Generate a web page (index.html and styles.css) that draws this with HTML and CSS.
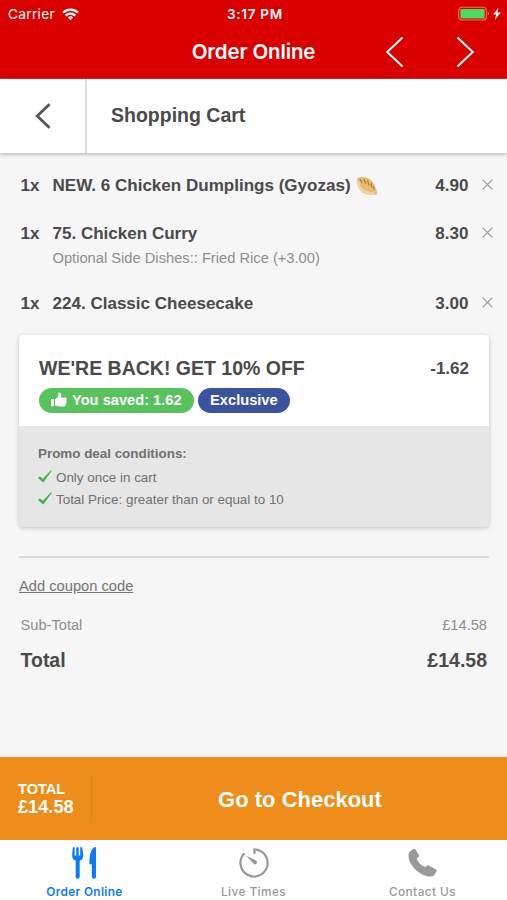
FILE: index.html
```html
<!DOCTYPE html>
<html lang="en">
<head>
<meta charset="utf-8">
<title>Shopping Cart</title>
<link rel="stylesheet" href="styles.css">
</head>
<body>
<div class="app">
  <header class="top">
    <div class="status">
      <div class="carrier"><span>Carrier</span>
        <svg width="17" height="13" viewBox="0 0 17 13" fill="none" stroke="#fff" stroke-width="2.300"><path d="M1 4.600a10.700 10.700 0 0 1 15 0M3.700 7.600a6.800 6.800 0 0 1 9.600 0"/><path d="M8.500 12.200 5.900 9.500a3.700 3.700 0 0 1 5.200 0z" fill="#fff" stroke="none"/></svg>
      </div>
      <div class="time">3:17 PM</div>
      <div class="power">
        <svg width="44" height="16" viewBox="0 0 44 16"><rect x=".7" y="1.200" width="27.600" height="12.800" rx="3" fill="none" stroke="#ef7650" stroke-width="1.100"/><rect x="2.400" y="3" width="24.200" height="9.400" rx="1.200" fill="#4cd964"/><path d="M29.800 5.600c1.600.7 1.600 3.200 0 4z" fill="#ef7650"/><path d="M40.500 1.600 35.200 8.600h3L36.800 14l6-7.600h-3.300z" fill="#fff"/></svg>
      </div>
    </div>
    <div class="nav">
      <h1>Order Online</h1>
      <svg class="arrows" width="90" height="32" viewBox="0 0 90 32" fill="none" stroke="#fff" stroke-width="2"><path d="M17.500 1.500 2.200 16l15.300 14.500M72.500 1.500 87.800 16 72.500 30.500"/></svg>
    </div>
  </header>
  <div class="subhead">
    <div class="back"><svg width="16" height="26" viewBox="0 0 16 26" fill="none" stroke="#555" stroke-width="2.800"><path d="M14.500 1.200 2.200 13l12.300 11.800"/></svg></div>
    <h2>Shopping Cart</h2>
  </div>
  <main>
    <ul class="items">
      <li><span class="qty">1x</span><div class="name">NEW. 6 Chicken Dumplings (Gyozas)
        <svg class="gyoza" width="22" height="20" viewBox="0 0 22 20"><path d="M1 3C2 .8 7 .2 11.500 2c5 2 7.500 6.500 8.500 11l1.500 4.600c-.5 1.200-2 1.400-3.500.9-5 .8-10.500-.3-14-4.500C1.500 11 .2 6 1 3z" fill="#e6bb78"/><path d="M2 5c0 5 3 9 7.500 11 3 1.300 6 1.500 9 1.500" fill="none" stroke="#f3d59d" stroke-width="2.600"/><path d="M4 3.200l2.200 3.600M7.800 3l2 4.800M11.600 4.300l1.400 5M15 6.800l.8 4.800M17.800 10.500l.2 3.200" fill="none" stroke="#a8743d" stroke-width="1.200"/></svg></div><span class="price">4.90</span><svg class="del" viewBox="0 0 11 11"><path d="M.6.6l9.800 9.800M10.400.6.6 10.400"/></svg></li>
      <li><span class="qty">1x</span><div class="name">75. Chicken Curry<small>Optional Side Dishes:: Fried Rice (+3.00)</small></div><span class="price">8.30</span><svg class="del" viewBox="0 0 11 11"><path d="M.6.6l9.800 9.800M10.400.6.6 10.400"/></svg></li>
      <li><span class="qty">1x</span><div class="name">224. Classic Cheesecake</div><span class="price">3.00</span><svg class="del" viewBox="0 0 11 11"><path d="M.6.6l9.800 9.800M10.400.6.6 10.400"/></svg></li>
    </ul>
    <section class="promo">
      <div class="deal">
        <div class="deal-row"><h3>WE'RE BACK! GET 10% OFF</h3><span class="price">-1.62</span></div>
        <div class="tags">
          <span class="tag saved"><svg width="16" height="15" viewBox="0 0 16 15" fill="#fff"><path d="M0 7h3v7.200H0zM4 7.200C6 6 7.200 4.600 7.300 2.400 7.300.8 8 .2 9 .6c1.700.7 1.500 3 .7 4.900h4.500c1.800 0 2 2 .9 2.500 1 .6.9 2-.2 2.400.7.700.5 1.900-.5 2.200.4 1-.2 1.800-1.400 1.800H8.500c-1.700 0-2.800-.8-4.500-1z"/></svg>You saved: 1.62</span>
          <span class="tag exclusive">Exclusive</span>
        </div>
      </div>
      <div class="conditions">
        <b>Promo deal conditions:</b>
        <p><svg class="check" viewBox="0 0 14 13"><path d="M0 8.200 1.800 6.200 4.800 8.800 13 .2l.8.6L5.300 12.500z"/></svg>Only once in cart</p>
        <p><svg class="check" viewBox="0 0 14 13"><path d="M0 8.200 1.800 6.200 4.800 8.800 13 .2l.8.6L5.300 12.500z"/></svg>Total Price: greater than or equal to 10</p>
      </div>
    </section>
    <hr>
    <a class="coupon">Add coupon code</a>
    <div class="sum sub"><span>Sub-Total</span><span>£14.58</span></div>
    <div class="sum total"><span>Total</span><span>£14.58</span></div>
  </main>
  <div class="checkout">
    <div class="amount"><span>TOTAL</span><b>£14.58</b></div>
    <div class="go">Go to Checkout</div>
  </div>
  <nav class="tabs">
    <div class="tab active"><svg width="26" height="34" viewBox="0 0 26 34" fill="currentColor"><path d="M.9 1.200h1.800v8.300h1.500V1.200h2.500v8.300h1.500V1.200H10c.9 3.500 1.200 6.500 1.200 8.800 0 2.300-1.500 4-3.500 4.700v16c0 2.600-4 2.600-4 0v-16C1.500 14 .2 12.300.2 10 .2 7.500.4 4.500.9 1.200zM24 1.200v29.500c0 2.600-4.200 2.600-4.200 0V18.200h-2.300c-.5-7 1-14.500 4.500-17z"/></svg><span>Order Online</span></div>
    <div class="tab"><svg width="32" height="34" viewBox="0 0 32 34" fill="none" stroke="currentColor" stroke-width="2.200"><path d="M16.500 8V3.300A13.600 13.600 0 1 1 6.500 7.200"/><path d="m8.300 9.800 9.700 4.700c2.200 1.400.2 5-2.200 3.600z" fill="currentColor" stroke="none"/></svg><span>Live Times</span></div>
    <div class="tab"><svg width="30" height="34" viewBox="0 0 30 34" fill="currentColor"><path d="M2 5.500 5.200 3c1-.6 1.700-.4 2.300.5l3.300 5.300c.5.900.3 1.600-.4 2.200l-1.900 1.700c1.600 3.800 4.700 6.700 8.500 8.300l2.200-1.300c.7-.5 1.300-.4 2 0l6.500 3.500c1 .6 1.200 1.300.7 2.200l-2 3.300c-.8 1.300-2.600 1.900-4.400 1.900C10.500 30 .5 18 .5 9.800.5 8 .9 6.500 2 5.500z"/></svg><span>Contact Us</span></div>
  </nav>
</div>
</body>
</html>
```

FILE: styles.css
```css
* { box-sizing: border-box; }
body { margin: 0; font-family: "Liberation Sans", Arial, sans-serif; color: #4a4a4a; background: #f6f6f6; }
h1, h2, h3, p, ul { margin: 0; padding: 0; }
svg { display: block; flex: none; }
.app { width: 507px; height: 900px; display: flex; flex-direction: column; overflow: hidden; }

.top { height: 79px; background: #da0000; color: #fff; font-family: Inter, sans-serif; flex: none; border-bottom: 1px solid #e22b26; }
.status { height: 27px; display: grid; grid-template-columns: 1fr auto 1fr; align-items: center; padding: 1px 5px 0 8px; font-size: 13.700px; line-height: 26px; }
.carrier { display: flex; align-items: center; gap: 7px; letter-spacing: .3px; }
.time { font-weight: 600; font-size: 13.500px; letter-spacing: .7px; }
.power { display: flex; justify-content: flex-end; }
.nav { height: 50px; display: grid; grid-template-columns: 1fr auto 1fr; align-items: center; }
.nav h1 { grid-column: 2; font-size: 20.500px; font-weight: 600; letter-spacing: -.15px; line-height: 50px; }
.arrows { justify-self: end; margin-right: 32px; }

.subhead { height: 74px; flex: none; display: flex; align-items: center; background: #fff; box-shadow: 0 1px 4px rgba(0,0,0,.3); }
.back { width: 87px; height: 74px; border-right: 2px solid #dddde1; display: flex; align-items: center; padding-left: 35px; }
.subhead h2 { margin-left: 24px; font-size: 19.500px; line-height: 72px; height: 74px; }

main { flex: 1; padding: 22px 18px 0 19px; }
.items { list-style: none; height: 160px; }
.items li { display: flex; align-items: flex-start; font-weight: bold; font-size: 17.050px; line-height: 21px; margin-bottom: 27px; padding-left: 1.500px; }
.items li:nth-child(2) { margin-bottom: 25px; }
.qty { width: 32px; flex: none; }
.name { flex: 1; white-space: nowrap; }
.name small { display: block; font-size: 14.700px; font-weight: normal; line-height: 20px; padding-top: 3.500px; color: #8e8e8e; }
.gyoza { display: inline-block; vertical-align: -4px; margin: -2px 0 -1px 1px; }
.del { width: 11px; height: 11px; margin: 4px -4px 0 13.500px; fill: none; stroke: #999; stroke-width: 1.200; }

.promo { height: 192px; width: 470px; border-radius: 4px; background: #e6e6e6; box-shadow: 0 1px 4px rgba(0,0,0,.22); overflow: hidden; }
.deal { height: 91px; background: #fff; padding: 22px 20px 0; }
.deal-row { display: flex; justify-content: space-between; line-height: 23px; }
.deal-row h3 { font-size: 19.500px; }
.deal-row .price { font-size: 17px; font-weight: bold; line-height: 24px; }
.tags { display: flex; gap: 4px; margin-top: 7px; }
.tag { height: 25px; border-radius: 13px; color: #fff; font-size: 14.650px; font-weight: bold; line-height: 25px; padding: 0 12px; display: flex; align-items: center; }
.saved { background: #58c35c; gap: 5px; }
.saved svg { margin-top: -2px; }
.exclusive { background: #3a539f; padding: 0 12.500px; }
.conditions { padding: 17px 19px; font-size: 13.400px; line-height: 22px; color: #707070; }
.conditions b { display: block; line-height: 21px; margin-bottom: 3px; }
.conditions p { display: flex; align-items: center; }
.check { width: 14px; height: 13px; fill: #45b64b; margin: -3px 4px 0 0; }

hr { border: 0; height: 2px; background: #d9d9d9; margin: 29px 0 0; width: 470px; }
.coupon { display: block; margin-top: 18px; font-size: 14.700px; line-height: 20px; text-decoration: underline; color: #747474; }
.sum { display: flex; justify-content: space-between; padding: 0 2px 0 1.500px; }
.sub { font-size: 14.650px; line-height: 20px; margin-top: 19px; color: #8e8e8e; }
.total { font-size: 19.500px; line-height: 24px; margin-top: 13px; font-weight: bold; }

.checkout { height: 83px; flex: none; background: #ee8d19; color: #fff; display: flex; align-items: center; }
.amount { width: 92px; height: 49px; padding: 6px 0 0 18px; border-right: 1px solid #d98725; font-size: 14.600px; font-weight: bold; line-height: 18px; }
.amount span, .amount b { display: block; }
.amount b { font-size: 18.200px; }
.go { flex: 1; text-align: center; font-size: 22px; font-weight: bold; padding: 2px 0 0 1px; }

.tabs { height: 60px; flex: none; background: #fff; display: grid; grid-template-columns: repeat(3, 1fr); font-family: Inter, sans-serif; font-size: 11.800px; font-weight: 600; letter-spacing: .35px; color: #999; }
.tab { display: flex; flex-direction: column; align-items: center; padding-top: 6px; line-height: 16px; }
.tab:nth-child(2), .tab:nth-child(3) { font-weight: 500; letter-spacing: .45px; }
.tab span { margin-top: 4px; }
.active { color: #0a7cf8; }
```
